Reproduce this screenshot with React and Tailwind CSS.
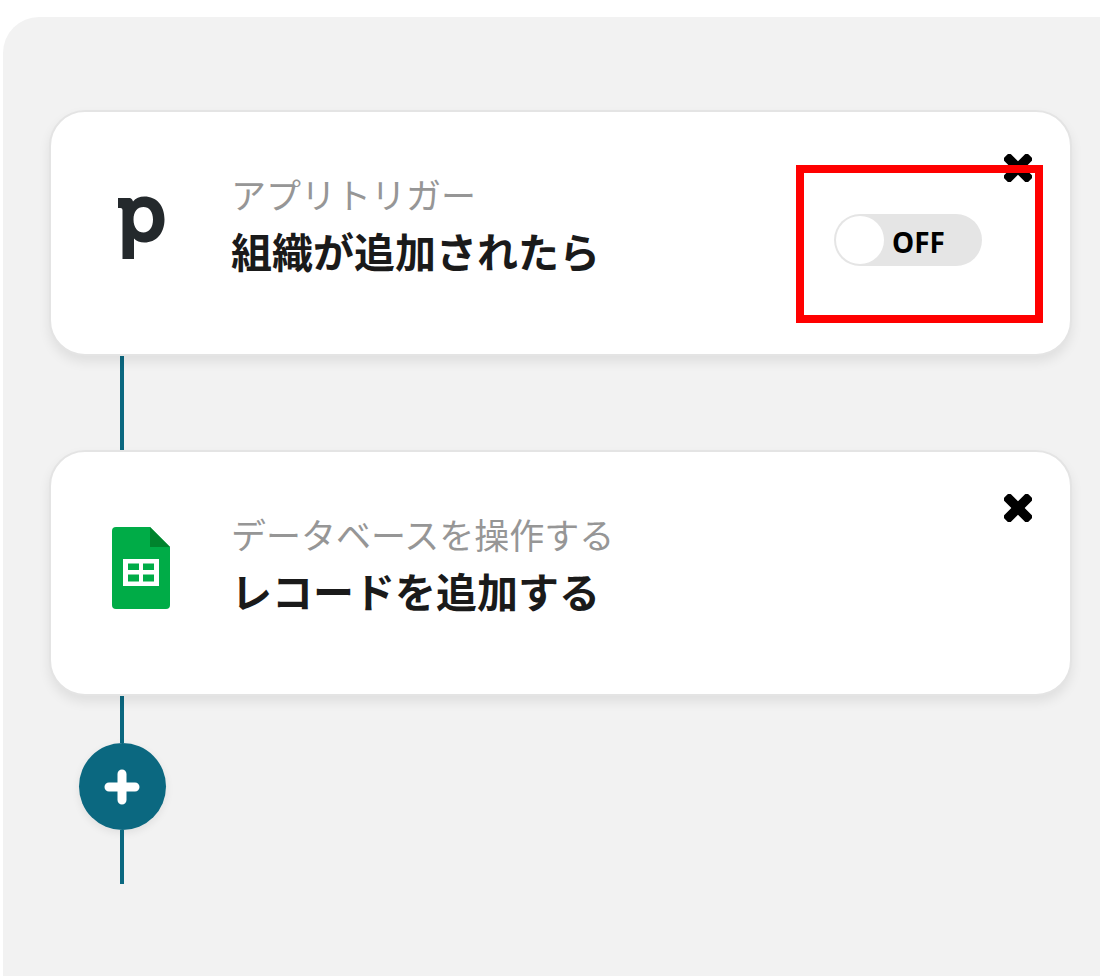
import React from "react";

function PipedriveIcon() {
  return (
    <svg viewBox="0 0 48 64" className="h-16 w-12" aria-hidden="true">
      <path
        fill="#24292c"
        fillRule="evenodd"
        d="M1 2H12.500Q15 2 16 5.500Q20 .5 27.500 .5C39.500 .5 47.500 9.500 47.500 23.500C47.500 37.500 39 46.500 27.500 46.500Q20.500 46.500 17 42.500V63H5.500V14Q5.500 12 3.500 12H1ZM26.500 11C20.500 11 16.500 15.500 16.500 23.500C16.500 32 21 36.500 26.500 36.500C32 36.500 36 31.500 36 23.500C36 15.500 32 11 26.500 11Z"
      />
    </svg>
  );
}

function SheetsIcon() {
  return (
    <svg viewBox="0 0 58 82" className="h-[82px] w-[58px]" aria-hidden="true">
      <path fill="#00ac47" d="M4 0H38L58 20V78Q58 82 54 82H4Q0 82 0 78V4Q0 0 4 0Z" />
      <path fill="#00832d" d="M38 0L58 20H38Z" />
      <path
        fill="#fff"
        fillRule="evenodd"
        d="M11 32H47V59H11ZM16 36.500H27V43H16ZM31 36.500H42V43H31ZM16 47.500H27V54.500H16ZM31 47.500H42V54.500H31Z"
      />
    </svg>
  );
}

function CloseButton() {
  return (
    <button type="button" aria-label="削除" className="mt-[42px] h-7 w-7 shrink-0 cursor-pointer">
      <svg viewBox="0 0 28 28" className="h-7 w-7" aria-hidden="true">
        <g transform="rotate(45 14 14)" fill="#000">
          <rect x="-3" y="9.300" width="34" height="9.400" rx="2.400" />
          <rect x="9.300" y="-3" width="9.400" height="34" rx="2.400" />
        </g>
      </svg>
    </button>
  );
}

function Toggle() {
  return (
    <label className="mt-[102px] flex h-[52px] w-[148px] shrink-0 cursor-pointer items-center rounded-full bg-[#e5e5e5] p-0.5">
      <input type="checkbox" role="switch" className="peer sr-only" />
      <span className="h-12 w-12 rounded-full bg-white peer-checked:order-last" />
      <span className="flex-1 pt-1 pl-2 font-['Noto_Sans',sans-serif] text-[28px] leading-12 font-bold text-black">OFF</span>
    </label>
  );
}

function StepCard({ icon, label, title, toggle }) {
  return (
    <section className="relative flex items-start rounded-[36px] border-2 border-[#e4e4e4] bg-white pr-[38px] pb-[76px] shadow-[0_6px_12px_rgba(0,0,0,0.08)]">
      <div className="-mb-[76px] flex h-[232px] w-[180px] shrink-0 items-center justify-center">{icon}</div>
      <div className="min-w-0 flex-1 pt-[54px]">
        <p className="text-[35px] leading-14 font-normal text-[#969696]">{label}</p>
        <h2 className="text-[41px] leading-14 font-bold text-[#1a1a1a]">{title}</h2>
      </div>
      <div className="flex items-start gap-[22px]">
        {toggle && <Toggle />}
        <CloseButton />
      </div>
      {toggle && (
        <div className="pointer-events-none absolute top-[53px] right-[27px] h-[158px] w-[247px] border-8 border-[#ff0000]" />
      )}
    </section>
  );
}

export default function App() {
  return (
    <div className="flex min-h-screen flex-col bg-white pt-[17px] pl-[3px] font-['Noto_Sans_CJK_JP',sans-serif]">
      <main className="flex-1 rounded-tl-[36px] bg-[#f2f2f2] pt-[93px] pr-7 pl-[46px]">
        <StepCard icon={<PipedriveIcon />} label="アプリトリガー" title="組織が追加されたら" toggle />
        <div className="ml-[71px] h-[94px] w-1 bg-[#0b6880]" />
        <StepCard icon={<SheetsIcon />} label="データベースを操作する" title="レコードを追加する" />
        <div className="ml-[29px] flex w-[88px] flex-col items-center">
          <div className="h-[47px] w-1 bg-[#0b6880]" />
          <button
            type="button"
            aria-label="追加"
            className="flex h-[87px] w-[87px] cursor-pointer items-center justify-center rounded-full bg-[#0b6880] shadow-[0_3px_8px_rgba(0,0,0,0.08)]"
          >
            <svg viewBox="0 0 36 36" className="h-9 w-9" aria-hidden="true">
              <path d="M18 5V31M5 18H31" stroke="#fff" strokeWidth="9" strokeLinecap="round" />
            </svg>
          </button>
          <div className="h-[54px] w-1 bg-[#0b6880]" />
        </div>
      </main>
    </div>
  );
}
